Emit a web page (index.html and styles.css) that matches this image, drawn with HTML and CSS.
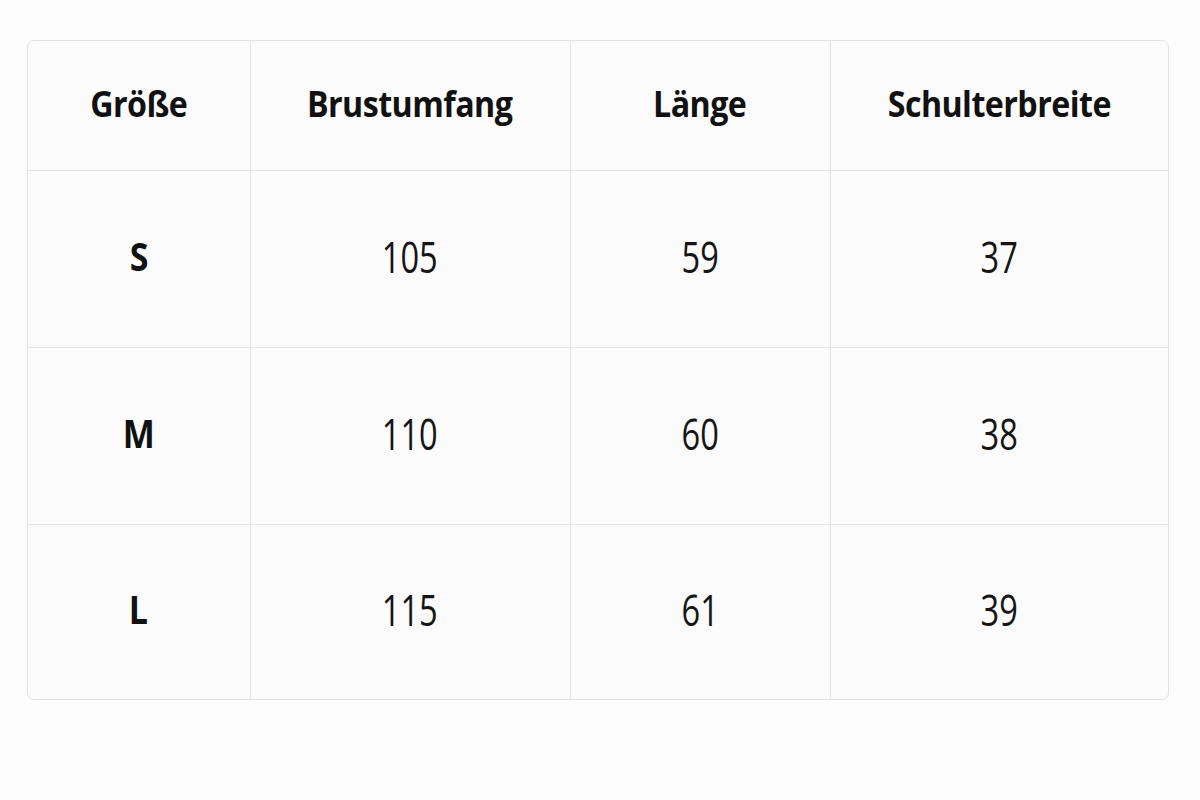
FILE: index.html
```html
<!DOCTYPE html>
<html lang="de">
<head>
<meta charset="utf-8">
<title>Größentabelle</title>
<link rel="stylesheet" href="styles.css">
</head>
<body>
<div class="wrap">
  <table class="sizes">
    <colgroup>
      <col class="c1"><col class="c2"><col class="c3"><col class="c4">
    </colgroup>
    <thead>
      <tr class="head">
        <th><span class="h">Größe</span></th>
        <th><span class="h">Brustumfang</span></th>
        <th><span class="h">Länge</span></th>
        <th><span class="h">Schulterbreite</span></th>
      </tr>
    </thead>
    <tbody>
      <tr class="r1">
        <td class="size"><span class="sz">S</span></td>
        <td><span class="num">105</span></td>
        <td><span class="num">59</span></td>
        <td><span class="num">37</span></td>
      </tr>
      <tr class="r2">
        <td class="size"><span class="sz">M</span></td>
        <td><span class="num">110</span></td>
        <td><span class="num">60</span></td>
        <td><span class="num">38</span></td>
      </tr>
      <tr class="r3">
        <td class="size"><span class="sz">L</span></td>
        <td><span class="num">115</span></td>
        <td><span class="num">61</span></td>
        <td><span class="num">39</span></td>
      </tr>
    </tbody>
  </table>
</div>
</body>
</html>
```
FILE: styles.css
```css
html, body {
  margin: 0;
  padding: 0;
  background: #fdfdfd;
}
body {
  font-family: "Open Sans", "Noto Sans", sans-serif;
  color: #111;
  width: 1200px;
  height: 800px;
}
.wrap {
  margin: 40px 0 0 27px;
  width: 1142px;
  border: 1px solid #e2e2e2;
  border-radius: 7px;
  overflow: hidden;
  background: #fbfbfb;
  box-sizing: border-box;
}
.sizes {
  width: 100%;
  border-collapse: collapse;
  table-layout: fixed;
}
.c1 { width: 222px; }
.c2 { width: 320px; }
.c3 { width: 260px; }
.c4 { width: auto; }
.sizes th, .sizes td {
  border-right: 1.5px solid #e4e4e4;
  border-bottom: 1.5px solid #e4e4e4;
  text-align: center;
  vertical-align: middle;
  padding: 0;
}
.sizes th:last-child, .sizes td:last-child { border-right: none; }
.sizes tbody tr:last-child td { border-bottom: none; }
.head { height: 129px; }
.r1, .r2 { height: 177px; }
.r3 { height: 175px; }
.h {
  display: inline-block;
  font-size: 35px;
  font-weight: 700;
  letter-spacing: -0.6px;
  transform: scaleX(0.92);
  position: relative;
  top: -2px;
}
.sz {
  display: inline-block;
  font-size: 40px;
  font-weight: 700;
  transform: scaleX(0.85);
  position: relative;
  top: -3px;
}
.num {
  display: inline-block;
  font-size: 44px;
  font-weight: 400;
  color: #151515;
  transform: scaleX(0.74);
  position: relative;
  top: -3px;
}
```
